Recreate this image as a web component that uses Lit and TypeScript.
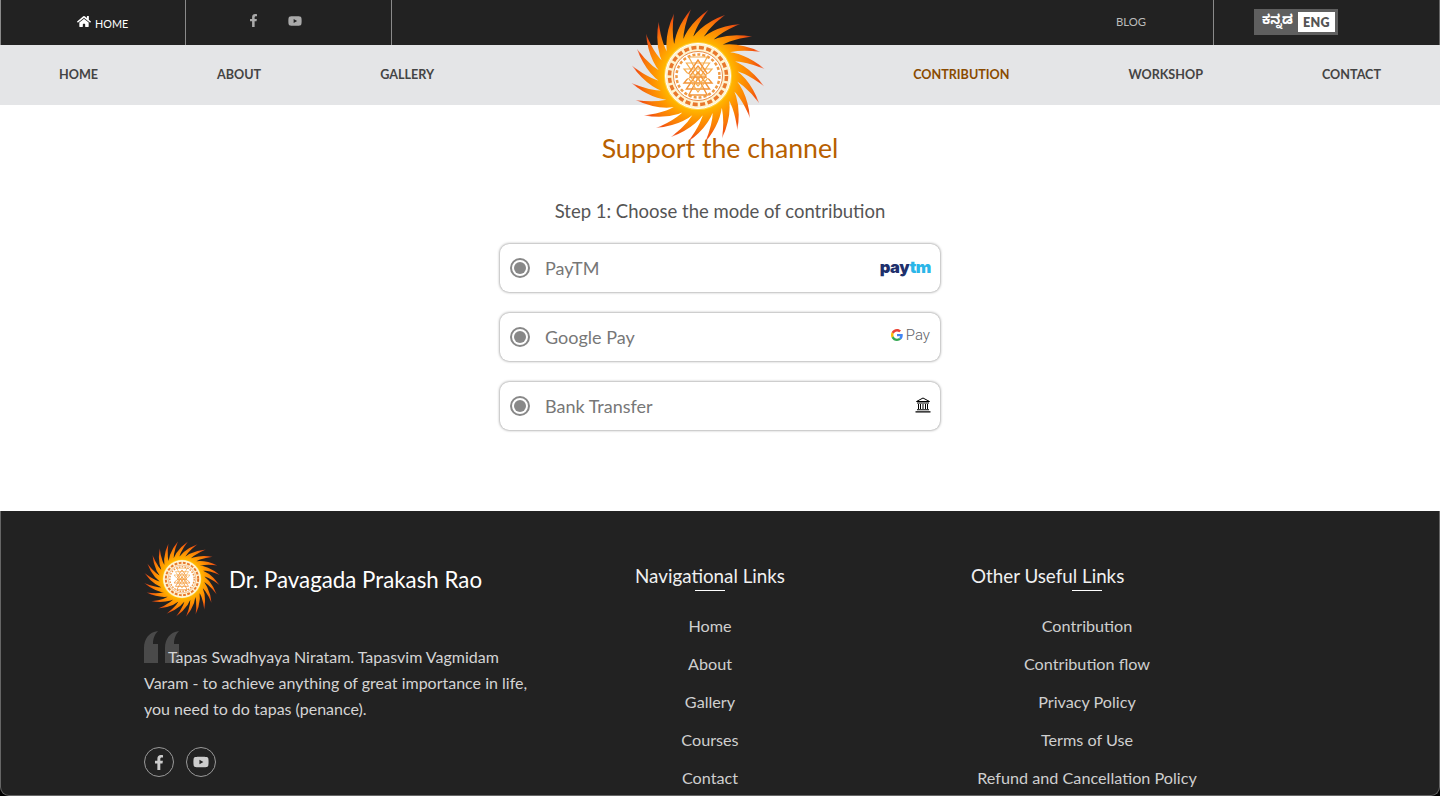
import { LitElement, html, css, svg } from "lit";
import { customElement } from "lit/decorators.js";

const polar = (r: number, deg: number) => {
  const a = ((deg - 90) * Math.PI) / 180;
  return `${(67 + r * Math.cos(a)).toFixed(2)} ${(67 + r * Math.sin(a)).toFixed(2)}`;
};

const rays = Array.from({ length: 24 }, (_, i) => {
  const t = i * 15 - 6;
  return `M${polar(30, t - 46)} Q${polar(50, t - 27)} ${polar(67, t)} Q${polar(46, t - 16)} ${polar(30, t - 22)}Z`;
}).join(" ");

const sun = (id: string) => html`<svg viewBox="0 0 134 134" width="100%" height="100%">
  <defs>
    <radialGradient id=${id} gradientUnits="userSpaceOnUse" cx="67" cy="67" r="67">
      <stop offset="0.5" stop-color="#ffb800"></stop>
      <stop offset="0.64" stop-color="#ff9800"></stop>
      <stop offset="0.8" stop-color="#f97a08"></stop>
      <stop offset="0.92" stop-color="#f2500f"></stop>
      <stop offset="1" stop-color="#f5502a" stop-opacity="0.5"></stop>
    </radialGradient>
  </defs>
  <circle cx="67" cy="67" r="40" fill="#ffad00"></circle>
  <path d=${rays} fill="url(#${id})"></path>
  <circle cx="67" cy="67" r="34" fill="#ffd24a"></circle>
  <circle cx="67" cy="67" r="32.500" fill="#fff3cf" stroke="#fff" stroke-width="1"></circle>
  <circle cx="67" cy="67" r="28.500" fill="none" stroke="#e8782c" stroke-width="3.500" stroke-dasharray="5 2.500"></circle>
  <circle cx="67" cy="67" r="24.500" fill="#fff" stroke="#e88c4a" stroke-width="1"></circle>
  <circle cx="67" cy="67" r="21.500" fill="none" stroke="#f09a44" stroke-width="2.500" stroke-dasharray="3 2"></circle>
  <circle cx="67" cy="67" r="18.500" fill="#fff"></circle>
  ${[-12, -6, 0, 6].map(
    (d) => svg`<path d="M${67 - 14 + Math.abs(d) * 0.4} ${67 - d + 7}H${67 + 14 - Math.abs(d) * 0.4}L67 ${67 - d - 10}Z" fill="none" stroke="#f2953a" stroke-width="1.400"></path>
    <path d="M${67 - 14 + Math.abs(d) * 0.4} ${67 + d - 7}H${67 + 14 - Math.abs(d) * 0.4}L67 ${67 + d + 10}Z" fill="none" stroke="#f6ae50" stroke-width="1.200"></path>`
  )}
  <circle cx="56" cy="67" r="2.500" fill="#fff"></circle>
  <circle cx="78" cy="67" r="2.500" fill="#fff"></circle>
</svg>`;

const homeIcon = html`<svg class="home-i" viewBox="0 0 576 512"><path fill="currentColor" d="M280.37 148.26L96 300.11V464a16 16 0 0 0 16 16l112.06-.29a16 16 0 0 0 15.92-16V368a16 16 0 0 1 16-16h64a16 16 0 0 1 16 16v95.64a16 16 0 0 0 16 16.05L464 480a16 16 0 0 0 16-16V300L295.67 148.26a12.19 12.19 0 0 0-15.3 0zM571.6 251.47L488 182.56V44.05a12 12 0 0 0-12-12h-56a12 12 0 0 0-12 12v72.61L318.47 43a48 48 0 0 0-61 0L4.34 251.47a12 12 0 0 0-1.6 16.9l25.5 31A12 12 0 0 0 45.15 301l235.22-193.74a12.19 12.19 0 0 1 15.3 0L530.9 301a12 12 0 0 0 16.9-1.6l25.5-31a12 12 0 0 0-1.7-16.93z"></path></svg>`;
const fIcon = html`<svg viewBox="0 0 320 512" class="f-i"><path fill="currentColor" d="M279.14 288l14.22-92.66h-88.91v-60.13c0-25.35 12.42-50.06 52.24-50.06h40.42V6.26S260.43 0 225.36 0c-73.22 0-121.08 44.38-121.08 124.72v70.62H22.89V288h81.39v224h100.17V288z"></path></svg>`;
const ytIcon = html`<svg viewBox="0 0 576 512" class="y-i"><path fill="currentColor" d="M549.655 124.083c-6.281-23.65-24.787-42.276-48.284-48.597C458.781 64 288 64 288 64S117.22 64 74.629 75.486c-23.497 6.322-42.003 24.947-48.284 48.597-11.412 42.867-11.412 132.305-11.412 132.305s0 89.438 11.412 132.305c6.281 23.65 24.787 41.5 48.284 47.821C117.22 448 288 448 288 448s170.78 0 213.371-11.486c23.497-6.321 42.003-24.171 48.284-47.821 11.412-42.867 11.412-132.305 11.412-132.305s0-89.438-11.412-132.305zm-317.51 213.508V175.185l142.739 81.205-142.739 81.201z"></path></svg>`;
const gIcon = html`<svg viewBox="0 0 48 48" class="g-i">
  <path fill="#EA4335" d="M24 9.5c3.5 0 6.7 1.2 9.2 3.6l6.9-6.9C35.9 2.4 30.5 0 24 0 14.6 0 6.5 5.4 2.6 13.2l8 6.2C12.4 13.7 17.7 9.5 24 9.5z"></path>
  <path fill="#4285F4" d="M47 24.5c0-1.6-.1-3.1-.4-4.5H24v9h12.9c-.6 3-2.2 5.5-4.7 7.2l7.7 6C44.400 38 47 31.800 47 24.500z"></path>
  <path fill="#FBBC05" d="M10.500 28.600c-.5-1.400-.8-3-.8-4.600s.3-3.200.8-4.600l-8-6.200C.9 16.500 0 20.100 0 24s.9 7.500 2.600 10.800l7.900-6.200z"></path>
  <path fill="#34A853" d="M24 48c6.500 0 11.900-2.100 15.900-5.800l-7.700-6c-2.100 1.400-4.900 2.300-8.200 2.300-6.300 0-11.600-4.200-13.500-9.900l-8 6.200C6.500 42.600 14.600 48 24 48z"></path>
</svg>`;
const bankIcon = html`<svg viewBox="0 0 16 16" class="bank-i">
  <path fill="none" stroke="#000" stroke-width="1" d="M8 1 14.500 4.500H1.500z"></path>
  <path fill="#000" d="M2 5.500h12v1H2zM3 7h1v5H3zM5 7h1v5H5zM7.500 7h1v5h-1zM10 7h1v5h-1zM12 7h1v5h-1zM2 12.300h12v1H2zM.5 14.200h15v1.200H.5z"></path>
</svg>`;

@customElement("app-root")
export class AppRoot extends LitElement {
  static styles = css`
    :host { display: block; height: 796px; overflow: hidden; position: relative; background: #000; font-family: "Lato", "Noto Sans", sans-serif; }
    * { box-sizing: border-box; }
    .top { height: 45px; background: #222; display: flex; align-items: stretch; color: #fff; border-right: 1px solid #666; }
    .cell { border-left: 1px solid #8a8a8a; display: flex; align-items: center; }
    .c1 { width: 185px; padding: 2px 0 0 76px; font-size: 10.800px; gap: 4px; }
    .home-i { width: 14px; height: 13px; margin-top: -4px; }
    .c2 { width: 206px; padding: 0 0 4px 63px; color: #aaa; gap: 30px; }
    .f-i { width: 9px; height: 13px; }
    .y-i { width: 14px; height: 14px; }
    .c3 { border-left: 1px solid #8a8a8a; flex: 1; }
    .blog { width: 97px; padding-bottom: 2px; font-size: 11.300px; color: #bbb; display: flex; align-items: center; }
    .c4 { width: 226px; padding-left: 40px; padding-bottom: 1px; }
    .lang { display: flex; align-items: center; width: 84px; height: 26px; background: #5f5f5f; padding: 3px; }
    .kn { flex: 1; text-align: center; font-size: 13px; font-weight: 700; color: #fff; font-family: "Noto Sans Kannada", "Noto Sans", sans-serif; }
    .en { width: 37px; height: 20px; background: #fff; color: #555; font-size: 12.500px; font-weight: 800; display: flex; align-items: center; justify-content: center; letter-spacing: .3px; }
    .nav { height: 60px; background: #e4e5e7; display: flex; justify-content: space-between; align-items: center; padding: 0 59px 2px; color: #444; font-size: 12.600px; font-weight: 700; }
    .group { display: flex; gap: 119px; }
    .active { color: #8a4b00; }
    .logo { position: absolute; left: 631px; top: 9px; width: 134px; height: 134px; z-index: 1; }
    .main { height: 406px; display: flex; flex-direction: column; align-items: center; position: relative; background: #fff; }
    h1 { margin: 24px 0 0; font-size: 26.700px; line-height: 38px; font-weight: 400; color: #b85f00; position: relative; z-index: 2; }
    .step { margin-top: 31px; font-size: 18.500px; line-height: 26px; color: #555; }
    .opts { display: flex; flex-direction: column; gap: 21px; margin-top: 20px; }
    .opt { width: 440px; height: 48px; background: #fff; border-radius: 9px; box-shadow: 0 0 3px rgba(0,0,0,.55); display: flex; align-items: center; padding: 0 9px 0 10px; color: #777; font-size: 18px; }
    .radio { width: 20px; height: 20px; border-radius: 50%; border: 2px solid #888; padding: 2px; margin-right: 15px; margin-top: -1px; }
    .radio i { display: block; width: 100%; height: 100%; background: #888; border-radius: 50%; }
    .name { flex: 1; }
    .paytm { font-family: "Inter", sans-serif; font-weight: 900; font-size: 16.500px; letter-spacing: -.4px; color: #20306c; margin-top: -3px; }
    .paytm b { color: #2bb6e8; font-weight: 900; }
    .gp { display: flex; align-items: center; gap: 3px; font-size: 15px; font-weight: 300; color: #5f6368; margin-top: -5px; margin-right: 1px; font-family: "Roboto", sans-serif; }
    .g-i { width: 12px; height: 12px; }
    .bank-i { width: 16px; height: 16px; margin-top: -3px; }
    .foot { height: 285px; background: #222; border: 1px solid #666; border-top: 0; border-radius: 0 0 9px 9px; display: flex; padding: 30px 0 0 143px; color: #ddd; position: relative; }
    .about { width: 385px; }
    .brand { display: flex; align-items: center; gap: 9px; height: 76px; color: #fff; font-size: 22.300px; }
    .sun { width: 76px; height: 76px; flex: none; }
    .quote { position: relative; margin: 27px 0 0; padding: 0; font-size: 16px; line-height: 26px; text-indent: 24px; color: #d4d4d4; }
    .quote span { position: relative; }
    .q-i { position: absolute; left: 0; top: -13px; width: 36px; height: 32px; }
    .social { margin-top: 25px; display: flex; gap: 12px; }
    .soc { width: 30px; height: 30px; border: 1px solid #999; border-radius: 50%; display: flex; align-items: center; justify-content: center; color: #ccc; }
    .soc .f-i { width: 10px; height: 15px; }
    .soc .y-i { width: 16px; height: 16px; }
    .col { display: flex; flex-direction: column; align-items: center; }
    .col.nv { width: 240px; margin-left: 61px; }
    .col.ot { width: 232px; margin-left: 141px; }
    h3 { margin: 21px 0 0; font-size: 18.800px; line-height: 28px; font-weight: 400; color: #f0f0f0; width: 100%; text-align: center; white-space: nowrap; }
    .ot h3 { text-align: left; }
    .rule { width: 30px; height: 1px; background: #fff; flex: none; }
    .links { margin-top: 16px; display: flex; flex-direction: column; align-items: center; font-size: 16.200px; color: #cfcfcf; white-space: nowrap; }
    .links span { height: 38px; line-height: 38px; }
  `;

  render() {
    return html`
      <div class="top">
        <div class="cell c1">${homeIcon}<span>HOME</span></div>
        <div class="cell c2">${fIcon}${ytIcon}</div>
        <div class="c3 cell"></div>
        <div class="blog">BLOG</div>
        <div class="cell c4"><div class="lang"><span class="kn">ಕನ್ನಡ</span><span class="en">ENG</span></div></div>
      </div>
      <div class="nav">
        <div class="group"><span>HOME</span><span>ABOUT</span><span>GALLERY</span></div>
        <div class="group"><span class="active">CONTRIBUTION</span><span>WORKSHOP</span><span>CONTACT</span></div>
      </div>
      <div class="logo">${sun("sunA")}</div>
      <div class="main">
        <h1>Support the channel</h1>
        <div class="step">Step 1: Choose the mode of contribution</div>
        <div class="opts">
          <div class="opt"><span class="radio"><i></i></span><span class="name">PayTM</span><span class="paytm">pay<b>tm</b></span></div>
          <div class="opt"><span class="radio"><i></i></span><span class="name">Google Pay</span><span class="gp">${gIcon}Pay</span></div>
          <div class="opt"><span class="radio"><i></i></span><span class="name">Bank Transfer</span>${bankIcon}</div>
        </div>
      </div>
      <div class="foot">
        <div class="about">
          <div class="brand"><div class="sun">${sun("sunB")}</div><span>Dr. Pavagada Prakash Rao</span></div>
          <p class="quote">
            <svg class="q-i" viewBox="0 0 36 32"><path fill="#4a4a4a" d="M0 32V17C0 8 5 1 14 0c-3 3-5 7-5 13h5v19zM21 32V17C21 8 26 1 35 0c-3 3-5 7-5 13h5v19z"></path></svg>
            <span>Tapas Swadhyaya Niratam. Tapasvim Vagmidam Varam - to achieve anything of great importance in life, you need to do tapas (penance).</span>
          </p>
          <div class="social"><span class="soc">${fIcon}</span><span class="soc">${ytIcon}</span></div>
        </div>
        <div class="col nv">
          <h3>Navigational Links</h3><div class="rule"></div>
          <div class="links"><span>Home</span><span>About</span><span>Gallery</span><span>Courses</span><span>Contact</span></div>
        </div>
        <div class="col ot">
          <h3>Other Useful Links</h3><div class="rule"></div>
          <div class="links"><span>Contribution</span><span>Contribution flow</span><span>Privacy Policy</span><span>Terms of Use</span><span>Refund and Cancellation Policy</span></div>
        </div>
      </div>
    `;
  }
}
